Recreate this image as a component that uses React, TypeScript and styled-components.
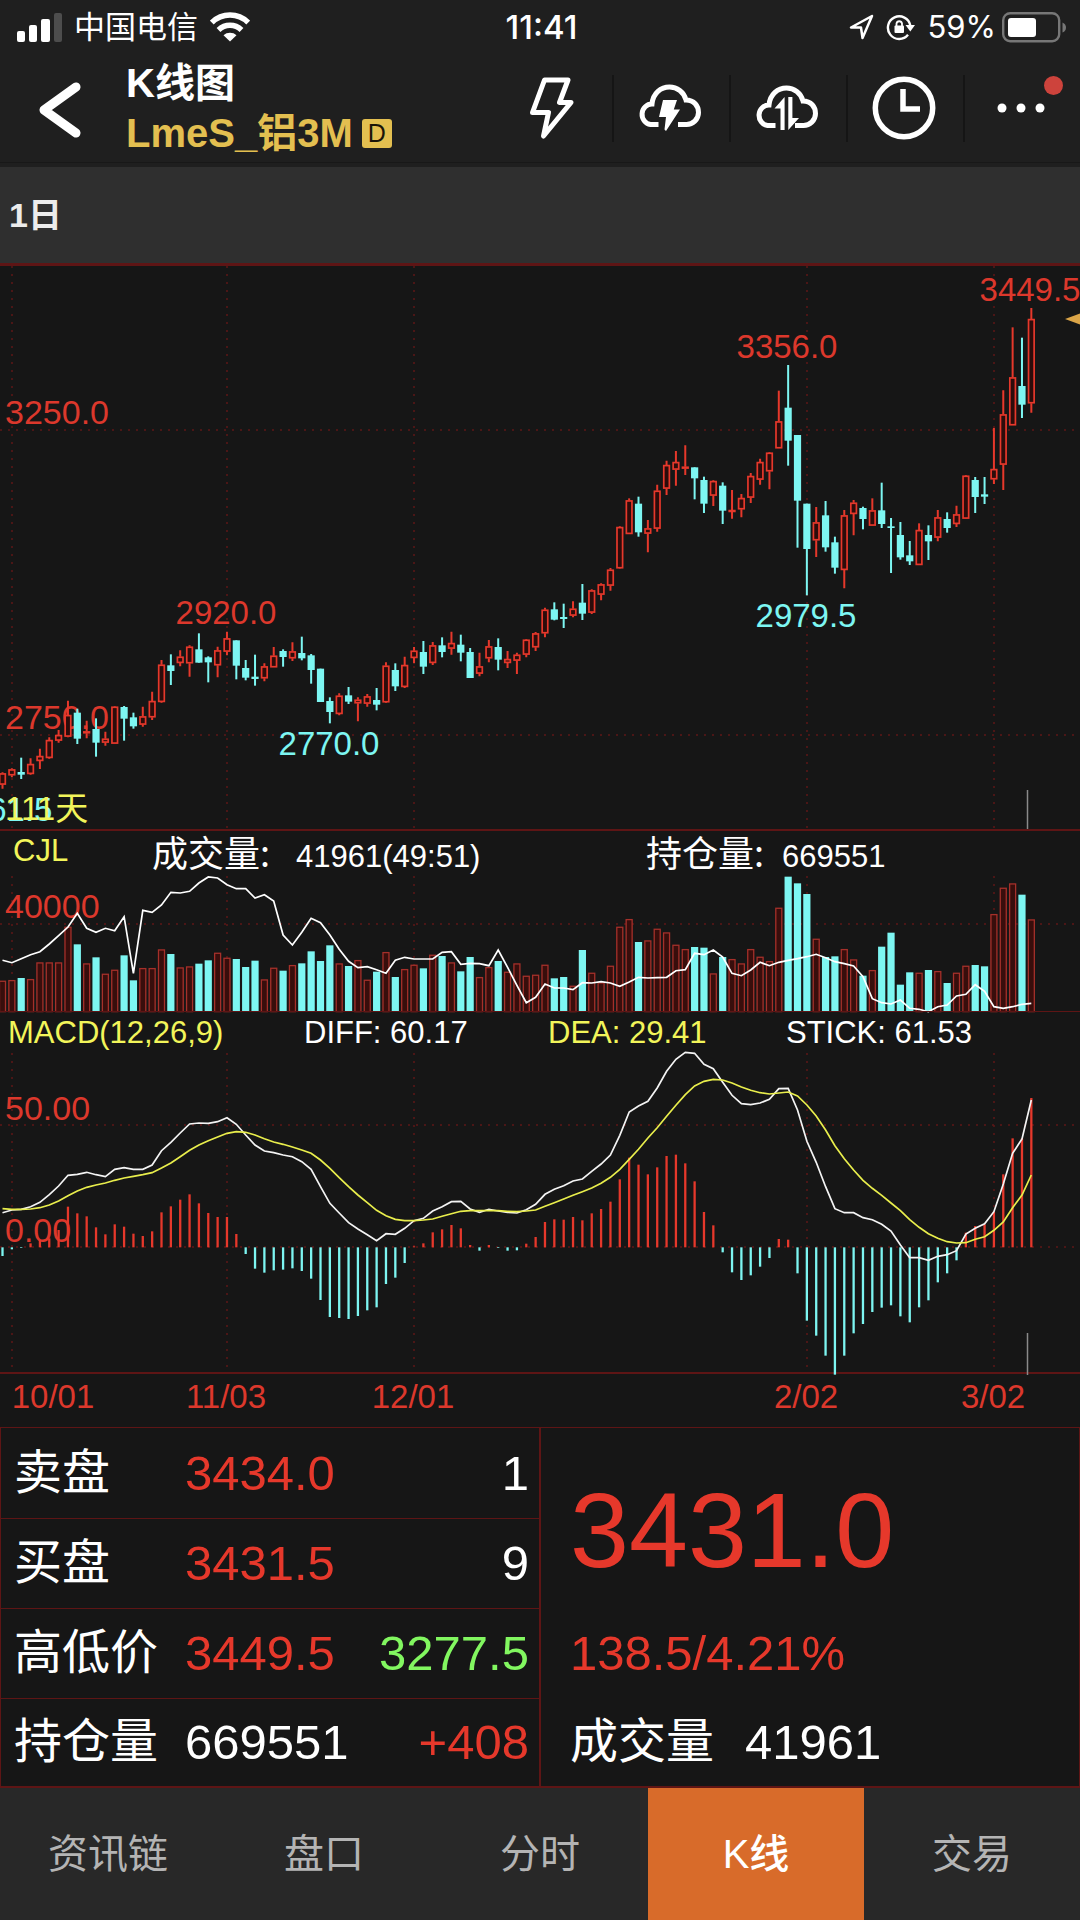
import React from "react";
import styled, { createGlobalStyle } from "styled-components";

const color = {
  page: "#161616",
  header: "#1f1f1f",
  strip: "#2f2f2f",
  tabs: "#282828",
  active: "#d86b2a",
  rule: "#5e1515",
  grid: "#5e1717",
  up: "#e6382b",
  upFill: "#2c0c0b",
  label: "#dc382c",
  down: "#7df6f2",
  gold: "#e3bf50",
  yellow: "#f2f55a",
  green: "#82f760",
  white: "#ffffff",
};

const GlobalStyle = createGlobalStyle`
  *, *::before, *::after { box-sizing: border-box; }
  body {
    margin: 0;
    background: ${color.page};
    color: ${color.white};
    font-family: "Liberation Sans", "Noto Sans CJK SC", sans-serif;
  }
  button { font: inherit; color: inherit; background: none; border: 0; padding: 0; cursor: pointer; }
`;

/* ---------- market data ---------- */

// high, body top, body bottom, low, rising (1) or falling (0);
// prices are measured downwards in thirds of a unit from the block's base
type Candle = [number, number, number, number, 0 | 1];

const blocks: { base: number; rows: Candle[] }[] = [
  {
    base: 580,
    rows: [
      [577, 580, 614, 626, 1], [565, 568, 586, 592, 1], [533, 576, 584, 597, 0], [535, 552, 582, 584, 1],
      [506, 528, 543, 567, 1], [472, 480, 534, 536, 1], [450, 465, 482, 488, 1], [362, 405, 470, 472, 1],
      [386, 398, 476, 492, 0], [422, 454, 460, 475, 1], [415, 447, 488, 530, 0], [455, 476, 488, 497, 1],
      [378, 380, 491, 491, 1], [378, 381, 416, 482, 0], [398, 412, 439, 446, 0], [380, 409, 434, 440, 1],
      [335, 363, 412, 420, 1], [240, 254, 366, 368, 1], [223, 256, 273, 315, 0], [211, 230, 249, 259, 1],
      [196, 200, 250, 290, 1], [160, 208, 248, 248, 0], [229, 232, 247, 307, 0], [200, 211, 256, 292, 1],
      [155, 175, 215, 226, 1], [181, 181, 257, 298, 0], [240, 264, 293, 301, 0], [224, 290, 297, 317, 0],
      [250, 259, 295, 304, 1], [201, 227, 262, 262, 1], [208, 213, 231, 260, 0], [187, 214, 235, 243, 1],
      [170, 219, 235, 241, 0], [222, 226, 270, 311, 0], [266, 266, 366, 366, 0], [352, 363, 396, 430, 0],
      [340, 347, 402, 406, 1], [321, 346, 365, 372, 0],
    ],
  },
  {
    base: 560,
    rows: [
      [412, 419, 430, 484, 1], [402, 409, 431, 440, 1], [384, 420, 434, 451, 0], [307, 317, 427, 429, 1],
      [310, 330, 379, 393, 0], [290, 315, 381, 384, 1], [261, 272, 294, 310, 1], [243, 276, 320, 342, 0],
      [246, 256, 309, 315, 1], [232, 256, 276, 292, 0], [215, 249, 266, 284, 1], [224, 254, 278, 304, 0],
      [264, 276, 354, 354, 0], [278, 319, 341, 349, 1], [240, 259, 295, 307, 1], [235, 261, 299, 331, 0],
      [273, 297, 309, 324, 1], [278, 284, 302, 342, 1], [237, 239, 284, 292, 1], [216, 220, 262, 273, 1],
      [143, 149, 220, 232, 1], [127, 148, 179, 181, 0], [131, 171, 177, 204, 0], [124, 146, 167, 172, 1],
      [72, 128, 161, 180, 0], [88, 91, 158, 162, 1], [70, 73, 104, 121, 1], [24, 29, 77, 92, 1],
    ],
  },
  {
    base: 260,
    rows: [
      [799, 801, 925, 926, 1], [715, 721, 822, 822, 1], [710, 731, 817, 830, 0], [780, 805, 821, 877, 1],
      [674, 692, 806, 815, 1], [602, 615, 686, 705, 1], [573, 606, 629, 677, 1], [556, 620, 626, 645, 1],
      [622, 622, 655, 718, 0], [650, 660, 731, 759, 0], [661, 663, 707, 738, 1], [667, 677, 752, 792, 0],
      [690, 750, 755, 776, 1], [702, 714, 748, 772, 1], [639, 648, 713, 729, 1], [596, 606, 659, 674, 1],
      [576, 578, 634, 688, 1], [392, 484, 565, 565, 1], [315, 443, 542, 617, 0], [525, 525, 722, 863, 0],
      [731, 731, 867, 1006, 0], [741, 787, 841, 891, 1], [723, 766, 862, 875, 0], [830, 847, 923, 941, 0],
      [750, 766, 930, 985, 1], [720, 728, 762, 826, 1], [740, 744, 777, 808, 0], [715, 751, 797, 797, 1],
      [668, 751, 792, 804, 0], [774, 799, 804, 939, 0], [786, 825, 892, 899, 0], [843, 886, 904, 915, 0],
      [790, 810, 915, 915, 1], [796, 825, 844, 900, 0], [750, 772, 833, 844, 1], [757, 777, 804, 818, 0],
      [737, 763, 792, 801, 1], [645, 647, 776, 777, 1], [651, 660, 711, 759, 0], [651, 703, 710, 732, 0],
      [504, 627, 658, 672, 1], [391, 463, 614, 690, 1], [202, 352, 496, 496, 1], [233, 378, 434, 474, 0],
      [144, 177, 430, 458, 1],
    ],
  },
];

const candles = blocks.flatMap(({ base, rows }) =>
  rows.map(([high, top, bottom, low, rising]) => ({
    high: base + high / 3,
    top: base + top / 3,
    bottom: base + bottom / 3,
    low: base + low / 3,
    rising: rising === 1,
  }))
);

const volume = [
  482, 480, 474, 477, 427, 427, 427, 320, 373, 430, 412, 461, 449, 406, 481, 444, 444, 388, 402, 442, 439, 431,
  421, 398, 413, 417, 441, 422, 478, 443, 452, 435, 430, 394, 423, 376, 430, 438, 420, 479, 455, 396, 471, 447,
  434, 445, 404, 408, 427, 454, 411, 471, 441, 423, 455, 430, 467, 464, 434, 475, 471, 497, 390, 458, 487, 437,
  320, 297, 366, 361, 326, 337, 374, 387, 381, 383, 460, 411, 417, 430, 387, 410, 423, 263, 170, 190, 222, 356,
  411, 409, 387, 418, 467, 450, 380, 338, 494, 457, 458, 450, 453, 489, 458, 437, 435, 439, 282, 203, 190, 224,
  298,
];

const openInterest = [
  421, 428, 416, 404, 395, 372, 347, 321, 280, 325, 337, 325, 332, 290, 460, 271, 277, 255, 217, 219, 214, 189,
  171, 174, 194, 206, 206, 234, 224, 243, 345, 375, 337, 295, 308, 345, 388, 424, 443, 440, 449, 460, 421, 412,
  417, 417, 417, 397, 395, 433, 430, 431, 437, 390, 442, 496, 548, 532, 492, 504, 504, 509, 488, 489, 485, 489,
  499, 486, 472, 474, 473, 472, 452, 449, 400, 404, 390, 411, 460, 467, 450, 427, 437, 427, 421, 416, 410, 403,
  413, 425, 431, 438, 470, 536, 548, 552, 540, 565, 568, 575, 560, 555, 528, 523, 494, 514, 560, 565, 560, 553,
  550,
];

const stick = [
  738, 718, 714, 700, 690, 685, 660, 590, 610, 619, 652, 673, 643, 650, 671, 678, 664, 607, 589, 569, 553, 580,
  609, 621, 621, 672, 732, 776, 788, 781, 779, 775, 783, 806, 870, 921, 924, 927, 918, 901, 892, 822, 803, 759,
  709, 700, 667, 658, 645, 655, 705, 722, 705, 714, 722, 721, 701, 681, 636, 628, 629, 621, 631, 610, 597, 575,
  508, 443, 464, 493, 472, 438, 434, 460, 514, 606, 646, 727, 787, 810, 796, 770, 744, 687, 689, 790, 932, 977,
  1037, 1094, 1037, 970, 942, 906, 893, 886, 919, 937, 892, 871, 817, 790, 751, 668, 648, 643, 605, 493, 385,
  385, 264,
];

const diff = [
  608, 600, 598, 590, 577, 554, 528, 496, 493, 487, 494, 500, 478, 473, 478, 478, 465, 422, 397, 369, 342, 339,
  340, 335, 323, 343, 375, 405, 423, 428, 435, 440, 455, 478, 530, 580, 609, 638, 657, 674, 692, 671, 673, 655,
  632, 625, 603, 590, 575, 574, 597, 607, 598, 603, 607, 609, 599, 583, 553, 538, 527, 513, 507, 484, 462, 435,
  376, 306, 288, 274, 234, 184, 148, 127, 130, 163, 176, 217, 256, 281, 284, 279, 268, 236, 235, 300, 394, 457,
  530, 596, 608, 608, 623, 629, 643, 663, 705, 743, 743, 751, 739, 734, 722, 672, 655, 641, 605, 522, 430, 387,
  270,
];

const dea = [
  596, 598, 598, 597, 593, 585, 573, 557, 543, 532, 525, 519, 511, 504, 499, 494, 488, 474, 459, 440, 421, 405,
  392, 381, 370, 365, 367, 375, 386, 396, 403, 411, 420, 430, 450, 475, 503, 530, 555, 578, 601, 617, 628, 632,
  632, 630, 627, 619, 611, 604, 602, 602, 602, 602, 604, 605, 603, 600, 589, 578, 567, 556, 545, 534, 520, 502,
  478, 448, 418, 384, 353, 319, 286, 254, 228, 214, 208, 210, 219, 231, 241, 248, 252, 249, 246, 258, 285, 318,
  360, 407, 446, 480, 511, 535, 556, 579, 602, 629, 652, 671, 685, 695, 699, 698, 688, 680, 661, 636, 593, 555,
  495,
];

const STEP = 9.353;
const xOf = (day: number) => 2.5 + day * STEP;
const volumeY = (v: number) => 820 + v / 3;
const macdY = (v: number) => 1010 + v / 3;
const ZERO = macdY(712);
const pointsOf = (values: number[], scale: (v: number) => number) =>
  values.map((v, day) => `${xOf(day).toFixed(1)},${scale(v).toFixed(1)}`).join(" ");

const months = [
  { x: 12, label: "10/01" },
  { x: 227, label: "11/03" },
  { x: 414, label: "12/01" },
  { x: 807, label: "2/02" },
  { x: 994, label: "3/02" },
];

/* ---------- layout ---------- */

const Screen = styled.main`
  display: flex;
  flex-direction: column;
  min-height: 100vh;
  background: ${color.page};
`;

const TopArea = styled.header`
  background: ${color.header};
  padding-bottom: 4px;
`;

const StatusBar = styled.div`
  display: grid;
  grid-template-columns: 1fr auto 1fr;
  align-items: center;
  height: 54px;
  padding: 0 14px 0 17px;
  font-family: Inter, "Noto Sans CJK SC", sans-serif;
  font-size: 31px;
  line-height: 40px;
`;

const StatusSide = styled.div<{ $end?: boolean }>`
  display: flex;
  align-items: center;
  justify-content: ${(p) => (p.$end ? "flex-end" : "flex-start")};
  gap: 12px;
`;

const Power = styled.span`
  display: flex;
  align-items: center;
  gap: 6px;
`;

const Clock = styled.time`
  font-size: 33px;
  font-weight: 500;
`;

const NavBar = styled.div`
  display: flex;
  align-items: center;
  height: 109px;
  border-bottom: 1px solid #181818;
`;

const BackButton = styled.button`
  display: flex;
  flex: 0 0 126px;
  justify-content: center;
  height: 100px;
  align-items: center;
  padding: 4px 6px 0 0;
`;

const Titles = styled.div`
  flex: 1;
  font-size: 40px;
  font-weight: 700;
  line-height: 50px;
  white-space: nowrap;
`;

const Title = styled.h1`
  margin: 0;
  font-size: inherit;
`;

const Symbol = styled.div`
  display: flex;
  align-items: center;
  gap: 9px;
  color: ${color.gold};
`;

const Badge = styled.span`
  width: 30px;
  height: 29px;
  border-radius: 3px;
  background: ${color.gold};
  color: #1a1408;
  font-size: 25px;
  font-weight: 400;
  line-height: 29px;
  text-align: center;
`;

const Actions = styled.nav`
  display: flex;
`;

const Action = styled.button`
  position: relative;
  display: flex;
  align-items: center;
  justify-content: center;
  width: 117px;
  height: 67px;
  padding-right: 4px;

  & + & {
    border-left: 2px solid #151515;
  }
`;

const Unread = styled.span`
  position: absolute;
  top: 1px;
  right: 17px;
  width: 19px;
  height: 19px;
  border-radius: 50%;
  background: #cd433c;
`;

const PeriodBar = styled.div`
  display: flex;
  align-items: center;
  height: 96px;
  padding: 0 9px;
  background: ${color.strip};
`;

const Period = styled.button`
  color: #ececec;
  font-size: 34px;
  font-weight: 700;
  line-height: 48px;
`;

const Panel = styled.section<{ $rule: number }>`
  border-top: ${(p) => p.$rule}px solid ${color.rule};
`;

const Plot = styled.svg`
  display: block;
  width: 100%;
  height: auto;
  overflow: visible;
  font-size: 33px;
`;

const AxisLabel = styled.text`
  fill: ${color.label};
  font-size: 34px;
`;

const VolumeLegend = styled.div`
  display: grid;
  grid-template-columns: 139fr 494fr 434fr;
  align-items: end;
  height: 45px;
  padding-left: 13px;
  font-size: 31px;
  line-height: 38px;
  white-space: nowrap;
`;

const Reading = styled.div<{ $gap: number }>`
  display: flex;
  align-items: baseline;
  gap: ${(p) => p.$gap}px;
`;

const ReadingName = styled.span`
  font-family: "Noto Sans CJK SC", sans-serif;
  font-size: 36px;
`;

const IndicatorName = styled.h2`
  align-self: start;
  margin: 0;
  color: ${color.yellow};
  font-size: 31px;
  font-weight: 400;
  line-height: 40px;
`;

const MacdLegend = styled.div`
  display: grid;
  grid-template-columns: 296fr 244fr 238fr 294fr;
  height: 41px;
  padding-left: 8px;
  font-size: 31px;
  line-height: 42px;
  white-space: nowrap;
`;

const Value = styled.span<{ $tone?: string }>`
  color: ${(p) => p.$tone || color.white};
`;

const Quote = styled.section`
  display: grid;
  grid-template-columns: 541fr 539fr;
  border: 1px solid ${color.rule};
  border-bottom-width: 2px;
  font-size: 49px;
  line-height: 60px;
  white-space: nowrap;
`;

const Ladder = styled.table`
  width: 100%;
  border-collapse: collapse;
  border-right: 2px solid ${color.rule};
`;

const Row = styled.tr`
  height: 90px;

  & + & {
    border-top: 1px solid ${color.rule};
  }

  &:last-child {
    height: 88px;
  }
`;

const RowName = styled.th`
  width: 184px;
  padding: 0 0 0 13px;
  font-size: 48px;
  font-weight: 400;
  text-align: left;
`;

const Cell = styled.td<{ $tone?: string; $end?: boolean }>`
  padding: ${(p) => (p.$end ? "0 10px 0 0" : "0")};
  color: ${(p) => p.$tone || color.white};
  text-align: ${(p) => (p.$end ? "right" : "left")};
`;

const Summary = styled.div`
  display: grid;
  grid-template-rows: 180fr 90fr 88fr;
  align-items: center;
  padding-left: 29px;
`;

const LastPrice = styled.strong`
  padding-top: 24px;
  color: ${color.up};
  font-size: 106px;
  font-weight: 400;
  line-height: 120px;
`;

const Change = styled.span`
  color: ${color.up};
`;

const Total = styled.span`
  display: flex;
  align-items: center;
  gap: 31px;
`;

const TotalName = styled.span`
  font-size: 48px;
`;

const Tabs = styled.nav`
  display: flex;
  flex: 1;
  min-height: 132px;
  background: ${color.tabs};
`;

const Tab = styled.button<{ $active?: boolean }>`
  flex: 1;
  background: ${(p) => (p.$active ? color.active : "transparent")};
  color: ${(p) => (p.$active ? color.white : "#b4b4b4")};
  font-size: 40px;
  font-weight: ${(p) => (p.$active ? 500 : 400)};
  line-height: 60px;
`;

/* ---------- icons ---------- */

const SignalIcon = () => (
  <svg width="45" height="29" viewBox="0 0 45 29" fill="#fff" aria-hidden="true">
    <rect x="0" y="18" width="8" height="11" rx="2" />
    <rect x="12" y="12" width="8" height="17" rx="2" />
    <rect x="24" y="6" width="9" height="23" rx="2" />
    <rect x="37" y="0" width="8" height="29" rx="2" fill="#4d4d4d" />
  </svg>
);

const WifiIcon = () => (
  <svg width="40" height="30" viewBox="0 0 40 30" fill="none" stroke="#fff" strokeWidth="5.500" aria-hidden="true">
    <path d="M1.800 10.500C12 .5 28 .5 38.200 10.500" />
    <path d="M8.500 18C15 11.800 25 11.800 31.500 18" />
    <path d="M20 29.500 13.500 23.300C17 20 23 20 26.500 23.300Z" fill="#fff" stroke="none" />
  </svg>
);

const LocationIcon = () => (
  <svg width="25" height="26" viewBox="0 0 25 26" fill="none" stroke="#fff" strokeWidth="2.500" strokeLinejoin="round" aria-hidden="true">
    <path d="M23 2 2 13.500H12L13.500 24Z" />
  </svg>
);

const RotationLockIcon = () => (
  <svg width="29" height="28" viewBox="0 0 29 28" fill="none" stroke="#fff" strokeWidth="2.400" aria-hidden="true">
    <path d="M22 21.800A11.300 11.300 0 1 1 24.300 12.500" />
    <path d="M19.500 12H29L24.300 18.500Z" fill="#fff" stroke="none" />
    <rect x="8.500" y="12.500" width="9.500" height="7.500" rx="1" fill="#fff" stroke="none" />
    <path d="M10.500 13V10.500A2.800 2.800 0 0 1 16 10.500V13" strokeWidth="1.800" />
  </svg>
);

const BatteryIcon = () => (
  <svg width="64" height="31" viewBox="0 0 64 31" aria-hidden="true">
    <rect x="1.200" y="1.200" width="56" height="28" rx="7" fill="none" stroke="#777" strokeWidth="2.400" />
    <rect x="6" y="6" width="28" height="19" rx="3" fill="#fff" />
    <path d="M60.500 10.500Q64 12 64 15.500T60.500 20.500Z" fill="#777" />
  </svg>
);

const BackIcon = () => (
  <svg width="44" height="58" viewBox="0 0 44 58" fill="none" stroke="#fff" strokeWidth="9" strokeLinejoin="round" strokeLinecap="round" aria-hidden="true">
    <path d="M38 6 6 29 38 52" />
  </svg>
);

const BoltIcon = () => (
  <svg width="64" height="64" viewBox="0 0 64 64" fill="none" stroke="#fff" strokeWidth="5" strokeLinejoin="round" aria-hidden="true">
    <path d="M24.500 4H48L39.500 26.500H51L23.500 60 28.500 36.500H12.500Z" />
  </svg>
);

const CLOUD = "M20.500 48.500H12.500A9.800 10.300 0 0 1 14 28C15 17 23 11 31.500 11 39 11 46 16 48 24 56 24 60.500 30 60.500 36.500A12 12 0 0 1 48 48.500H40";

const CloudBoltIcon = () => (
  <svg width="64" height="64" viewBox="0 0 64 64" aria-hidden="true">
    <path d={CLOUD} fill="none" stroke="#fff" strokeWidth="5" />
    <path d="M25 24H39L35.800 33.500H42L28 55 26.500 53.500 28 41H21Z" fill="#fff" />
  </svg>
);

const CloudTransferIcon = () => (
  <svg width="64" height="64" viewBox="0 -1 64 64" aria-hidden="true">
    <path d={CLOUD} fill="none" stroke="#fff" strokeWidth="5" />
    <path d="M19.500 31.500 29.600 20V53H25.500V31.500Z" fill="#fff" />
    <path d="M33.300 20H37.400V41H44L33.300 53Z" fill="#fff" />
  </svg>
);

const ClockIcon = () => (
  <svg width="64" height="64" viewBox="0 0 64 64" fill="none" stroke="#fff" strokeWidth="5.500" aria-hidden="true">
    <circle cx="32" cy="32" r="28.700" />
    <path d="M31 13V33H48" />
  </svg>
);

const MoreIcon = () => (
  <svg width="50" height="12" viewBox="0 0 50 12" fill="#fff" aria-hidden="true">
    <circle cx="6" cy="6" r="4.500" />
    <circle cx="25" cy="6" r="4.500" />
    <circle cx="44" cy="6" r="4.500" />
  </svg>
);

/* ---------- charts ---------- */

const dotted = { stroke: color.grid, strokeWidth: 1.5, strokeDasharray: "2 6" };

const MonthLines = ({ from, to }: { from: number; to: number }) => (
  <g {...dotted}>
    {months.map((m) => (
      <line key={m.label} x1={m.x} x2={m.x} y1={from} y2={to} />
    ))}
  </g>
);

const PriceChart = () => (
  <Plot viewBox="0 266 1080 563" role="img" aria-label="K线">
    <MonthLines from={266} to={829} />
    <g {...dotted}>
      <line x1="0" x2="1080" y1="430" y2="430" />
      <line x1="0" x2="1080" y1="735" y2="735" />
    </g>
    <AxisLabel x="5" y="424">3250.0</AxisLabel>
    <AxisLabel x="5" y="729">2750.0</AxisLabel>
    {candles.map((c, day) => {
      const x = xOf(day);
      return c.rising ? (
        <g key={day} stroke={color.up} strokeWidth="1.700">
          <path d={`M${x} ${c.high}V${c.top}M${x} ${c.bottom}V${c.low}`} strokeWidth="2" />
          <rect x={x - 2.8} y={c.top + 0.6} width="5.600" height={Math.max(c.bottom - c.top - 1.2, 0.8)} fill={color.upFill} />
        </g>
      ) : (
        <g key={day} fill={color.down}>
          <rect x={x - 1} y={c.high} width="2" height={c.low - c.high} />
          <rect x={x - 3.6} y={c.top} width="7.200" height={c.bottom - c.top} />
        </g>
      );
    })}
    <g fill={color.label} textAnchor="middle">
      <text x="226" y="624">2920.0</text>
      <text x="787" y="358">3356.0</text>
      <text x="1030" y="301">3449.5</text>
    </g>
    <g fill={color.down} textAnchor="middle">
      <text x="329" y="755">2770.0</text>
      <text x="806" y="627">2979.5</text>
      <text x="2" y="821">2661.5</text>
    </g>
    <text x="5" y="820" fill={color.yellow}>111天</text>
    <path d="M1065 319 1080 313.500V324.500Z" fill="#dba548" />
    <line x1="1027.500" x2="1027.500" y1="790" y2="829" stroke="#8a8a8a" strokeWidth="1.500" />
  </Plot>
);

const VolumeChart = () => (
  <Plot viewBox="0 876 1080 135" role="img" aria-label="成交量">
    <MonthLines from={876} to={1011} />
    <line x1="0" x2="1080" y1="924" y2="924" {...dotted} />
    <AxisLabel x="5" y="918">40000</AxisLabel>
    {volume.map((v, day) => {
      const x = xOf(day);
      const top = volumeY(v);
      return candles[day].rising ? (
        <rect key={day} x={x - 3} y={top + 0.6} width="6" height={1011 - top} fill="#380e0c" stroke="#a5302a" strokeWidth="1.300" />
      ) : (
        <rect key={day} x={x - 3.6} y={top} width="7.200" height={1012 - top} fill={color.down} />
      );
    })}
    <polyline points={pointsOf(openInterest, volumeY)} fill="none" stroke="#fff" strokeWidth="1.700" />
  </Plot>
);

const MacdChart = () => (
  <Plot viewBox="0 1053 1080 374" role="img" aria-label="MACD">
    <MonthLines from={1053} to={1373} />
    <g {...dotted}>
      <line x1="0" x2="1080" y1="1125" y2="1125" />
      <line x1="0" x2="1080" y1="1247" y2="1247" />
    </g>
    <line x1="0" x2="1080" y1="1373" y2="1373" stroke={color.rule} strokeWidth="2" />
    <AxisLabel x="5" y="1120">50.00</AxisLabel>
    <AxisLabel x="5" y="1242">0.00</AxisLabel>
    {stick.map((v, day) => (
      <line
        key={day}
        x1={xOf(day)}
        x2={xOf(day)}
        y1={ZERO}
        y2={macdY(v)}
        stroke={v < 712 ? color.up : color.down}
        strokeWidth="2.300"
      />
    ))}
    <polyline points={pointsOf(diff, macdY)} fill="none" stroke="#f4f4f4" strokeWidth="1.700" />
    <polyline points={pointsOf(dea, macdY)} fill="none" stroke="#e9ee4c" strokeWidth="1.700" />
    <line x1="1027.500" x2="1027.500" y1="1333" y2="1375" stroke="#8a8a8a" strokeWidth="1.500" />
    <g fill={color.label} textAnchor="middle">
      {months.map((m, i) => (
        <text key={m.label} x={i === 0 ? 53 : m.x - 1} y="1408">
          {m.label}
        </text>
      ))}
    </g>
  </Plot>
);

/* ---------- page ---------- */

const ladder = [
  { name: "卖盘", price: "3434.0", tone: color.up, amount: "1", amountTone: color.white },
  { name: "买盘", price: "3431.5", tone: color.up, amount: "9", amountTone: color.white },
  { name: "高低价", price: "3449.5", tone: color.up, amount: "3277.5", amountTone: color.green },
  { name: "持仓量", price: "669551", tone: color.white, amount: "+408", amountTone: color.up },
];

const tabs = ["资讯链", "盘口", "分时", "K线", "交易"];

export default function App() {
  return (
    <>
      <GlobalStyle />
      <Screen>
        <TopArea>
          <StatusBar>
            <StatusSide>
              <SignalIcon />
              <span>中国电信</span>
              <WifiIcon />
            </StatusSide>
            <Clock>11:41</Clock>
            <StatusSide $end>
              <LocationIcon />
              <RotationLockIcon />
              <Power>
                59%
                <BatteryIcon />
              </Power>
            </StatusSide>
          </StatusBar>
          <NavBar>
            <BackButton aria-label="返回">
              <BackIcon />
            </BackButton>
            <Titles>
              <Title>K线图</Title>
              <Symbol>
                LmeS_铝3M
                <Badge>D</Badge>
              </Symbol>
            </Titles>
            <Actions>
              <Action aria-label="闪电"><BoltIcon /></Action>
              <Action aria-label="云闪电"><CloudBoltIcon /></Action>
              <Action aria-label="云传输"><CloudTransferIcon /></Action>
              <Action aria-label="时间"><ClockIcon /></Action>
              <Action aria-label="更多">
                <MoreIcon />
                <Unread />
              </Action>
            </Actions>
          </NavBar>
        </TopArea>

        <PeriodBar>
          <Period>1日</Period>
        </PeriodBar>

        <Panel $rule={3}>
          <PriceChart />
        </Panel>

        <Panel $rule={2}>
          <VolumeLegend>
            <IndicatorName>CJL</IndicatorName>
            <Reading $gap={26}>
              <ReadingName>成交量:</ReadingName>
              <Value>41961(49:51)</Value>
            </Reading>
            <Reading $gap={18}>
              <ReadingName>持仓量:</ReadingName>
              <Value>669551</Value>
            </Reading>
          </VolumeLegend>
          <VolumeChart />
        </Panel>

        <Panel $rule={1}>
          <MacdLegend>
            <Value $tone={color.yellow}>MACD(12,26,9)</Value>
            <Value>DIFF: 60.17</Value>
            <Value $tone={color.yellow}>DEA: 29.41</Value>
            <Value>STICK: 61.53</Value>
          </MacdLegend>
          <MacdChart />
        </Panel>

        <Quote>
          <Ladder>
            <tbody>
              {ladder.map((r) => (
                <Row key={r.name}>
                  <RowName scope="row">{r.name}</RowName>
                  <Cell $tone={r.tone}>{r.price}</Cell>
                  <Cell $tone={r.amountTone} $end>{r.amount}</Cell>
                </Row>
              ))}
            </tbody>
          </Ladder>
          <Summary>
            <LastPrice>3431.0</LastPrice>
            <Change>138.5/4.21%</Change>
            <Total>
              <TotalName>成交量</TotalName>
              <span>41961</span>
            </Total>
          </Summary>
        </Quote>

        <Tabs>
          {tabs.map((t) => (
            <Tab key={t} $active={t === "K线"} aria-current={t === "K线" ? "page" : undefined}>
              {t}
            </Tab>
          ))}
        </Tabs>
      </Screen>
    </>
  );
}
